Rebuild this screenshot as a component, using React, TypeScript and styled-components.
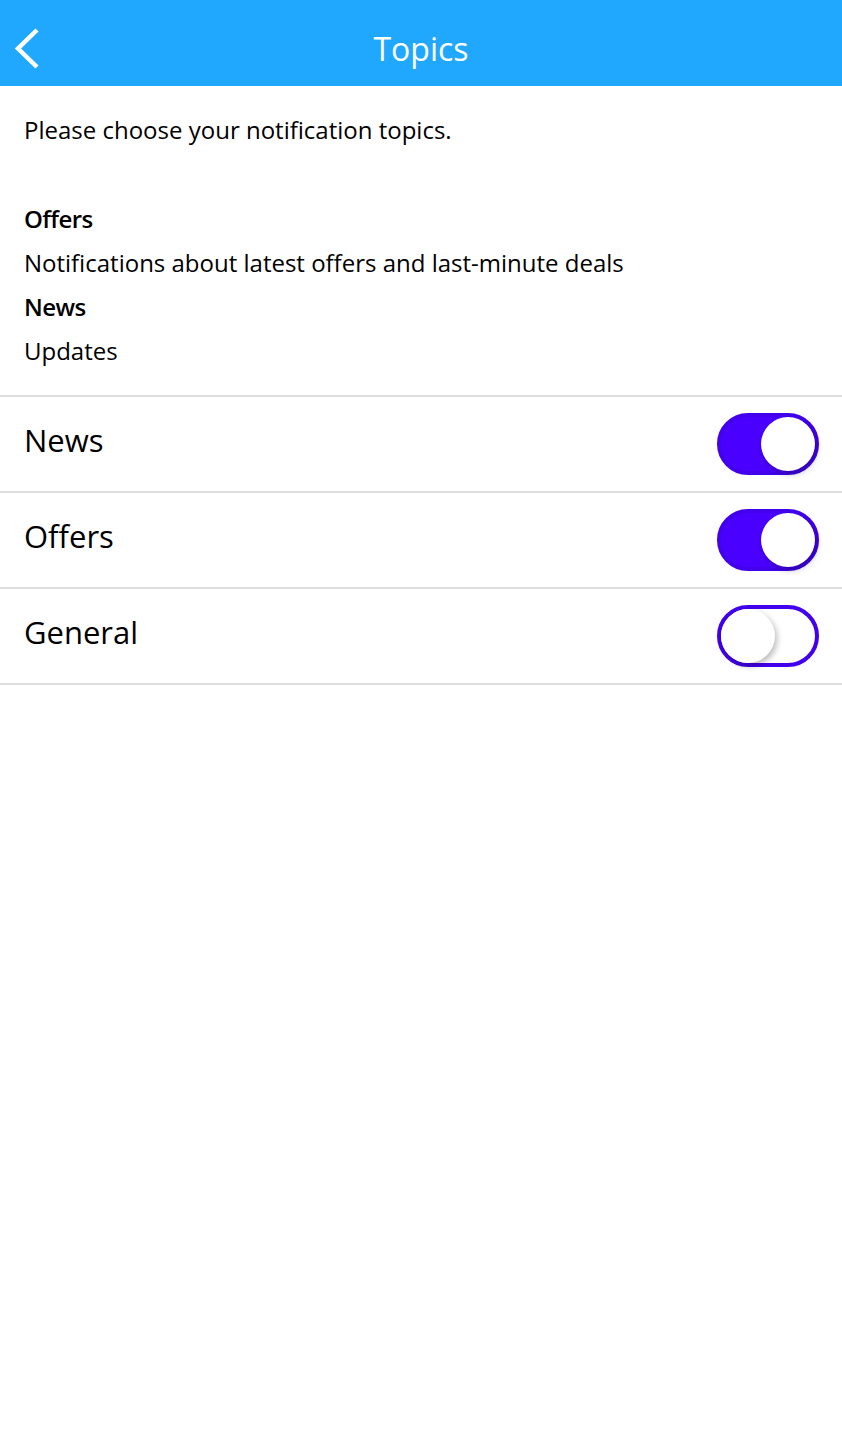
import React, { useState } from "react";
import styled, { createGlobalStyle } from "styled-components";

const GlobalStyle = createGlobalStyle`
  body {
    margin: 0;
    background: #ffffff;
    font-family: "Open Sans", "Noto Sans", sans-serif;
    color: #000000;
  }
`;

interface Topic {
  id: string;
  label: string;
}

const topics: Topic[] = [
  { id: "news", label: "News" },
  { id: "offers", label: "Offers" },
  { id: "general", label: "General" },
];

const Header = styled.header`
  height: 86px;
  background: #20a8ff;
  display: flex;
  align-items: center;
  justify-content: center;
  position: relative;
`;

const BackButton = styled.button`
  position: absolute;
  left: 10px;
  top: 26px;
  width: 36px;
  height: 44px;
  padding: 0;
  border: none;
  background: transparent;
  cursor: pointer;
`;

const Title = styled.h1`
  margin: 10px 0 0;
  font-size: 32px;
  font-weight: 400;
  color: #ffffff;
`;

const Intro = styled.section`
  padding: 22px 24px 22px;
  font-size: 24px;
  line-height: 44px;
`;

const IntroText = styled.p`
  margin: 0 0 45px;
`;

const TopicName = styled.div`
  font-weight: 600;
  letter-spacing: -0.6px;
`;

const TopicDesc = styled.div``;

const List = styled.div`
  border-top: 2px solid #dddddd;
`;

const Row = styled.div`
  height: 94px;
  border-bottom: 2px solid #dddddd;
  display: flex;
  align-items: center;
  justify-content: space-between;
  padding: 0 24px;
`;

const RowLabel = styled.span`
  font-size: 31px;
  margin-bottom: 9px;
`;

const Track = styled.button<{ $on: boolean }>`
  width: 102px;
  height: 62px;
  margin-right: -1px;
  border-radius: 31px;
  border: 4px solid #4200ec;
  background: ${(p) => (p.$on ? "#4a00ff" : "#ffffff")};
  padding: 0;
  display: flex;
  align-items: center;
  justify-content: ${(p) => (p.$on ? "flex-end" : "flex-start")};
  cursor: pointer;
`;

const Knob = styled.span`
  width: 54px;
  height: 54px;
  border-radius: 50%;
  background: #ffffff;
  box-shadow: 2px 3px 6px rgba(0, 0, 0, 0.28);
`;

export default function App() {
  const [state, setState] = useState<Record<string, boolean>>({
    news: true,
    offers: true,
    general: false,
  });

  return (
    <>
      <GlobalStyle />
      <Header>
        <BackButton aria-label="Back">
          <svg width="36" height="44" viewBox="0 0 36 44">
            <polyline
              points="27,4 8,22.5 27,41"
              fill="none"
              stroke="#ffffff"
              strokeWidth="4.5"
            />
          </svg>
        </BackButton>
        <Title>Topics</Title>
      </Header>
      <Intro>
        <IntroText>Please choose your notification topics.</IntroText>
        <TopicName>Offers</TopicName>
        <TopicDesc>Notifications about latest offers and last-minute deals</TopicDesc>
        <TopicName>News</TopicName>
        <TopicDesc>Updates</TopicDesc>
      </Intro>
      <List>
        {topics.map((t) => (
          <Row key={t.id}>
            <RowLabel>{t.label}</RowLabel>
            <Track
              $on={state[t.id]}
              onClick={() => setState((s) => ({ ...s, [t.id]: !s[t.id] }))}
            >
              <Knob />
            </Track>
          </Row>
        ))}
      </List>
    </>
  );
}
